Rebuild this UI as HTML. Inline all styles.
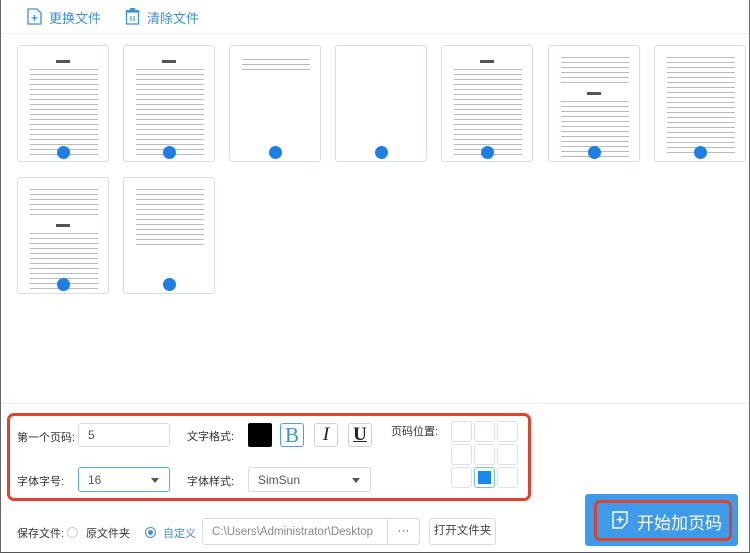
<!DOCTYPE html>
<html><head><meta charset="utf-8"><style>
*{box-sizing:border-box;margin:0;padding:0}
body{width:750px;height:553px;background:#fff;font-family:"Liberation Sans","Noto Sans CJK SC",sans-serif;font-size:12px;color:#333;position:relative;overflow:hidden}
.win{position:absolute;left:0;top:0;width:750px;height:553px;border-left:1px solid #666;border-right:1px solid #666;border-bottom:1px solid #555}
.abs{position:absolute}
.tb{color:#3d8fe0;font-size:13px}
.th{position:absolute;width:92px;height:117px;border:1px solid #d6dde6;border-radius:3px;background:#fff;overflow:hidden}
.th .t{position:absolute;left:12px;right:10px;background:repeating-linear-gradient(#fff 0 1px,#777 1px 2px,#fff 2px 5px);opacity:.5}
.th .h{position:absolute;left:38px;width:14px;height:3px;background:#555;top:14px}
.dot{position:absolute;left:39px;bottom:2px;width:13px;height:13px;border-radius:50%;background:#1f7de6}
.inp{position:absolute;border:1px solid #d8dbe0;border-radius:3px;background:#fff;font-size:12px;color:#555;padding-left:9px;line-height:23px}
.fb{position:absolute;width:24px;height:24px;border:1px solid #cfd3d8;border-radius:3px;text-align:center;line-height:22px;font-family:"Liberation Serif",serif;font-size:19px;color:#222}
.cell{position:absolute;width:21px;height:21px;border:1px solid #dde1e6;border-radius:3px;background:#fff}
.lbl{position:absolute;font-size:11px;color:#333}
.arr{position:absolute;right:10px;top:10px;border-left:4px solid transparent;border-right:4px solid transparent;border-top:5px solid #555}
.radio{position:absolute;width:11px;height:11px;border-radius:50%;border:1px solid #ccc;background:#fff}
</style></head><body>
<div class="win"></div>
<div class="abs" style="left:27px;top:8px"><svg width="15" height="17" viewBox="0 0 15 17"><path d="M1 1h9l4 4v11H1z" fill="none" stroke="#3d8fe0" stroke-width="1.3"/><path d="M7.5 7v6M4.5 10h6" stroke="#3d8fe0" stroke-width="1.3"/></svg></div>
<div class="abs tb" style="left:49px;top:8px">更换文件</div>
<div class="abs" style="left:125px;top:8px"><svg width="15" height="17" viewBox="0 0 15 17"><path d="M1.5 4h12v12h-12z" fill="none" stroke="#3d8fe0" stroke-width="1.3"/><path d="M1 3h13M5 1h5" stroke="#3d8fe0" stroke-width="2"/><path d="M6 8v5M9 8v5" stroke="#3d8fe0" stroke-width="1.1"/></svg></div>
<div class="abs tb" style="left:147px;top:8px">清除文件</div>
<div class="abs" style="left:1px;top:33px;width:748px;height:1px;background:#eceef1"></div>

<div class="th" style="left:17px;top:45px"><div class="h"></div><div class="t" style="top:22px;height:90px"></div><div class="dot"></div></div>
<div class="th" style="left:123px;top:45px"><div class="h"></div><div class="t" style="top:22px;height:90px"></div><div class="dot"></div></div>
<div class="th" style="left:229px;top:45px"><div class="t" style="top:12px;height:16px"></div><div class="dot"></div></div>
<div class="th" style="left:335px;top:45px"><div class="dot"></div></div>
<div class="th" style="left:441px;top:45px"><div class="h"></div><div class="t" style="top:22px;height:90px"></div><div class="dot"></div></div>
<div class="th" style="left:548px;top:45px"><div class="t" style="top:10px;height:30px"></div><div class="h" style="top:46px"></div><div class="t" style="top:54px;height:58px"></div><div class="dot"></div></div>
<div class="th" style="left:654px;top:45px"><div class="t" style="top:10px;height:100px"></div><div class="dot"></div></div>
<div class="th" style="left:17px;top:177px"><div class="t" style="top:10px;height:28px"></div><div class="h" style="top:46px"></div><div class="t" style="top:54px;height:58px"></div><div class="dot"></div></div>
<div class="th" style="left:123px;top:177px"><div class="t" style="top:10px;height:60px"></div><div class="dot"></div></div>

<div class="abs" style="left:1px;top:403px;width:748px;height:1px;background:#eceef1"></div>
<div class="abs" style="left:7px;top:413px;width:524px;height:88px;border:3px solid #e0432c;border-radius:7px"></div>
<div class="lbl" style="left:17px;top:429px">第一个页码:</div>
<div class="inp" style="left:78px;top:423px;width:92px;height:24px">5</div>
<div class="lbl" style="left:187px;top:428px">文字格式:</div>
<div class="abs" style="left:248px;top:423px;width:24px;height:24px;background:#000;border-radius:2px"></div>
<div class="fb" style="left:280px;top:423px;border-color:#4aa0ef;color:#3d8fe0;font-size:21px">B</div>
<div class="fb" style="left:314px;top:423px;font-style:italic">I</div>
<div class="fb" style="left:348px;top:423px;font-weight:bold;text-decoration:underline">U</div>
<div class="lbl" style="left:391px;top:423px">页码位置:</div>
<div class="cell" style="left:451px;top:421px"></div><div class="cell" style="left:474px;top:421px"></div><div class="cell" style="left:497px;top:421px"></div>
<div class="cell" style="left:451px;top:444px"></div><div class="cell" style="left:474px;top:444px"></div><div class="cell" style="left:497px;top:444px"></div>
<div class="cell" style="left:451px;top:467px"></div><div class="cell" style="left:474px;top:467px;border-color:#7dbaf3;padding:3px"><div style="width:13px;height:13px;background:#1a86f0"></div></div><div class="cell" style="left:497px;top:467px"></div>
<div class="lbl" style="left:17px;top:473px">字体字号:</div>
<div class="inp" style="left:78px;top:467px;width:92px;height:25px;border-color:#5aa8ef;line-height:24px">16<div class="arr"></div></div>
<div class="lbl" style="left:187px;top:473px">字体样式:</div>
<div class="inp" style="left:248px;top:467px;width:123px;height:25px;line-height:24px">SimSun<div class="arr"></div></div>

<div class="lbl" style="left:17px;top:525px">保存文件:</div>
<div class="radio" style="left:67px;top:527px"></div>
<div class="lbl" style="left:86px;top:525px">原文件夹</div>
<div class="radio" style="left:145px;top:527px;border-color:#3d8fe0;padding:2px"><div style="width:5px;height:5px;border-radius:50%;background:#3d8fe0"></div></div>
<div class="lbl" style="left:163px;top:525px;color:#3d8fe0">自定义</div>
<div class="inp" style="left:202px;top:518px;width:218px;height:27px;line-height:26px;color:#888;font-size:11.5px">C:\Users\Administrator\Desktop</div>
<div class="abs" style="left:387px;top:518px;width:33px;height:27px;border:1px solid #d8dbe0;border-radius:0 3px 3px 0;text-align:center;line-height:22px;color:#666">···</div>
<div class="abs" style="left:429px;top:518px;width:67px;height:27px;border:1px solid #d8dbe0;border-radius:3px;text-align:center;line-height:25px;font-size:11.5px;color:#444">打开文件夹</div>

<div class="abs" style="left:585px;top:494px;width:153px;height:52px;background:#3d9be9;border-radius:3px"></div>
<div class="abs" style="left:594px;top:500px;width:138px;height:41px;border:3px solid #e0432c;border-radius:6px"></div>
<div class="abs" style="left:612px;top:511px"><svg width="16" height="18" viewBox="0 0 16 18"><path d="M1 1h14v10l-5 6H1z" fill="none" stroke="#fff" stroke-width="1.4"/><path d="M8 5v7M4.5 8.5h7" stroke="#fff" stroke-width="1.4"/></svg></div>
<div class="abs" style="left:637px;top:509px;color:#fff;font-size:17px">开始加页码</div>
</body></html>
